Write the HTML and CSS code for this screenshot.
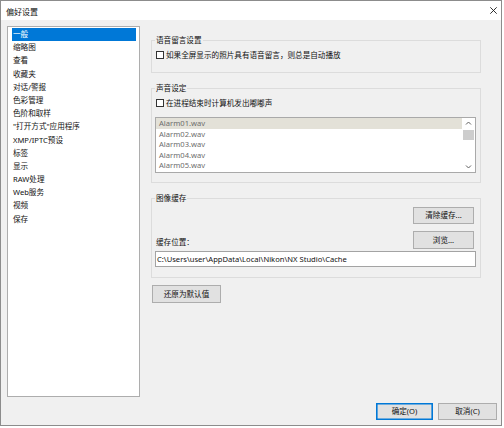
FILE: index.html
```html
<!DOCTYPE html>
<html lang="zh-CN">
<head>
<meta charset="utf-8">
<title>偏好设置</title>
<link rel="stylesheet" href="styles.css">
</head>
<body>
<div class="window">
  <div class="titlebar">
    <span class="title">偏好设置</span>
    <svg class="close" width="7" height="7" viewBox="0 0 7 7"><path d="M0.3 0.3L6.7 6.7M6.7 0.3L0.3 6.7" stroke="#1a1a1a" stroke-width="0.9" fill="none"/></svg>
  </div>
  <div class="body">
    <div class="main">
      <ul class="nav">
        <li class="selected">一般</li>
        <li>缩略图</li>
        <li>查看</li>
        <li>收藏夹</li>
        <li>对话/警报</li>
        <li>色彩管理</li>
        <li>色阶和取样</li>
        <li>"打开方式"应用程序</li>
        <li>XMP/IPTC预设</li>
        <li>标签</li>
        <li>显示</li>
        <li>RAW处理</li>
        <li>Web服务</li>
        <li>视频</li>
        <li>保存</li>
      </ul>
      <div class="pane">
        <fieldset class="group g-voice">
          <legend>语音留言设置</legend>
          <label class="check"><span class="box"></span>如果全屏显示的照片具有语音留言，则总是自动播放</label>
        </fieldset>
        <fieldset class="group g-sound">
          <legend>声音设定</legend>
          <label class="check"><span class="box"></span>在进程结束时计算机发出嘟嘟声</label>
          <div class="listbox">
            <ul class="sounds">
              <li class="current">Alarm01.wav</li>
              <li>Alarm02.wav</li>
              <li>Alarm03.wav</li>
              <li>Alarm04.wav</li>
              <li>Alarm05.wav</li>
            </ul>
            <div class="scrollbar">
              <svg class="arrow" width="13" height="11" viewBox="0 0 13 11"><path d="M4 6.5L6.5 4L9 6.5" stroke="#606060" stroke-width="1" fill="none"/></svg>
              <div class="track"><div class="thumb"></div></div>
              <svg class="arrow" width="13" height="11" viewBox="0 0 13 11"><path d="M4 4.5L6.5 7L9 4.5" stroke="#606060" stroke-width="1" fill="none"/></svg>
            </div>
          </div>
        </fieldset>
        <fieldset class="group g-cache">
          <legend>图像缓存</legend>
          <div class="row row-end"><button class="btn btn-side">清除缓存...</button></div>
          <div class="row row-between"><span class="label">缓存位置：</span><button class="btn btn-side btn-tall">浏览...</button></div>
          <div class="textbox">C:\Users\user\AppData\Local\Nikon\NX Studio\Cache</div>
        </fieldset>
        <div class="restore-row"><button class="btn btn-restore">还原为默认值</button></div>
      </div>
    </div>
    <div class="footer">
      <button class="btn btn-ok">确定(O)</button>
      <button class="btn btn-cancel">取消(C)</button>
    </div>
  </div>
</div>
</body>
</html>
```

FILE: styles.css
```css
* { box-sizing: border-box; }
html, body { margin: 0; padding: 0; background: #fff; }
body {
  width: 504px;
  height: 428px;
  overflow: hidden;
  font-family: "Noto Sans", "Noto Sans CJK SC", sans-serif;
  font-size: 7.6px;
  color: #111;
}
.window {
  width: 502px;
  height: 426px;
  border: 1px solid #8c8c8c;
  background: #f0f0f0;
  display: flex;
  flex-direction: column;
}
.titlebar {
  flex: none;
  height: 19px;
  background: #fff;
  display: flex;
  align-items: center;
  justify-content: space-between;
  padding: 0 4px 0 5px;
}
.title { font-size: 8px; line-height: 19px; padding-top: 1px; }
.close { display: block; }

.body {
  flex: 1;
  display: flex;
  flex-direction: column;
  padding: 6px 4px 5px 6px;
}
.main {
  display: flex;
  gap: 11px;
  height: 371px;
}
.nav {
  flex: none;
  width: 133px;
  height: 371px;
  margin: 0;
  padding: 1px 3px 0 4px;
  list-style: none;
  background: #fff;
  border: 1px solid #adadad;
}
.nav li {
  height: 13.2px;
  line-height: 13.2px;
  padding-left: 1px;
  white-space: nowrap;
}
.nav li.selected { background: #0078d7; color: #fff; }

.pane {
  width: 330px;
  display: flex;
  flex-direction: column;
  padding-top: 9px;
}
.group {
  margin: 0;
  min-width: 0;
  border: 1px solid #dcdcdc;
  padding: 5px 4px 9px 3px;
}
.group legend {
  padding: 0 1px;
  line-height: 10px;
}
.g-voice { padding-bottom: 12px; }
.g-sound { margin-top: 10px; }
.g-cache { margin-top: 10px; padding-top: 4px; padding-bottom: 10px; }

.check {
  display: flex;
  align-items: center;
  gap: 2px;
  height: 10px;
  line-height: 10px;
  margin-left: 1px;
  white-space: nowrap;
}
.box {
  width: 8px;
  height: 8px;
  background: #fff;
  border: 1px solid #333;
  flex: none;
}

.listbox {
  margin-top: 9px;
  height: 56px;
  border: 1px solid #a9a9a9;
  background: #fff;
  display: flex;
}
.sounds {
  flex: 1;
  margin: 0;
  padding: 0;
  list-style: none;
  color: #6d6d6d;
}
.sounds li {
  height: 10.5px;
  line-height: 10.5px;
  padding-left: 3px;
}
.sounds li.current { background: #e3e1d8; }
.scrollbar {
  width: 13px;
  display: flex;
  flex-direction: column;
  background: #fff;
}
.arrow { display: block; flex: none; }
.track { flex: 1; padding: 1px 1px 0 1px; }
.thumb { height: 10px; background: #cdcdcd; }

.row { display: flex; align-items: center; }
.row-end { justify-content: flex-end; }
.row-between { justify-content: space-between; margin-top: 7px; }
.label { margin-left: 1px; padding-top: 4px; line-height: 10px; }

.btn {
  font: inherit;
  color: #111;
  background: #e1e1e1;
  border: 1px solid #adadad;
  padding: 0;
  margin: 0;
  height: 17px;
  line-height: 15px;
  text-align: center;
  white-space: nowrap;
}
.btn-side { width: 61px; margin-right: 2px; }
.btn-tall { height: 18px; }
.textbox {
  margin-top: 2px;
  height: 16px;
  line-height: 14px;
  border: 1px solid #a3a3a3;
  background: #fff;
  padding-left: 1px;
  white-space: nowrap;
  overflow: hidden;
}
.restore-row { margin-top: 7px; padding-left: 1px; }
.btn-restore { width: 69px; height: 18px; }

.footer {
  display: flex;
  justify-content: flex-end;
  gap: 5px;
  margin-top: 6px;
}
.btn-ok { width: 57px; border-color: #0078d7; box-shadow: inset 0 0 0 0.6px #0078d7; }
.btn-cancel { width: 59px; }
```
